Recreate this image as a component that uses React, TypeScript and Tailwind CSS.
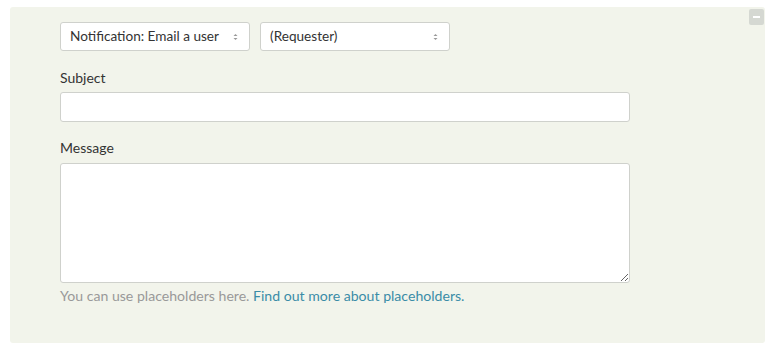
const Chevrons = () => (
  <svg width="5" height="8" viewBox="0 0 5 8" className="text-[#999]">
    <path d="M0.5 3 L2.5 1 L4.5 3 Z" fill="currentColor" />
    <path d="M0.5 5 L2.5 7 L4.5 5 Z" fill="currentColor" />
  </svg>
);

const FakeSelect = ({ label }: { label: string }) => (
  <div className="w-[190px] h-[29px] bg-white border border-[#cfd1cc] rounded-[3px] flex items-center justify-between pl-[9px] pr-[11px] text-[13.6px] text-[#333]">
    <span>{label}</span>
    <Chevrons />
  </div>
);

export default function App() {
  return (
    <div className="w-[772px] h-[348px] bg-white pt-[7px] pl-[10px] font-['Lato','Open_Sans',sans-serif]">
      <div className="relative w-[755px] h-[336px] bg-[#f2f4eb] rounded-[3px] pl-[50px] pt-[15px]">
        <button className="absolute top-[2px] right-[1px] w-[15px] h-[16px] bg-[#d5d8d2] rounded-[2px] flex items-center justify-center">
          <span className="block w-[7px] h-[2px] bg-white" />
        </button>

        <div className="flex gap-[10px]">
          <FakeSelect label="Notification: Email a user" />
          <FakeSelect label="(Requester)" />
        </div>

        <label className="block mt-[17px] text-[14px] leading-[20px] text-[#333]">Subject</label>
        <input
          type="text"
          className="block mt-[4px] w-[570px] h-[30px] bg-white border border-[#cfd1cc] rounded-[3px]"
        />

        <label className="block mt-[16px] text-[14px] leading-[20px] text-[#333]">Message</label>
        <textarea className="block mt-[5px] w-[570px] h-[120px] bg-white border border-[#cfd1cc] rounded-[3px]" />

        <p className="mt-[3px] text-[14.1px] leading-[20px] text-[#999]">
          You can use placeholders here.{" "}
          <a className="text-[#3a8ca7]">Find out more about placeholders.</a>
        </p>
      </div>
    </div>
  );
}
